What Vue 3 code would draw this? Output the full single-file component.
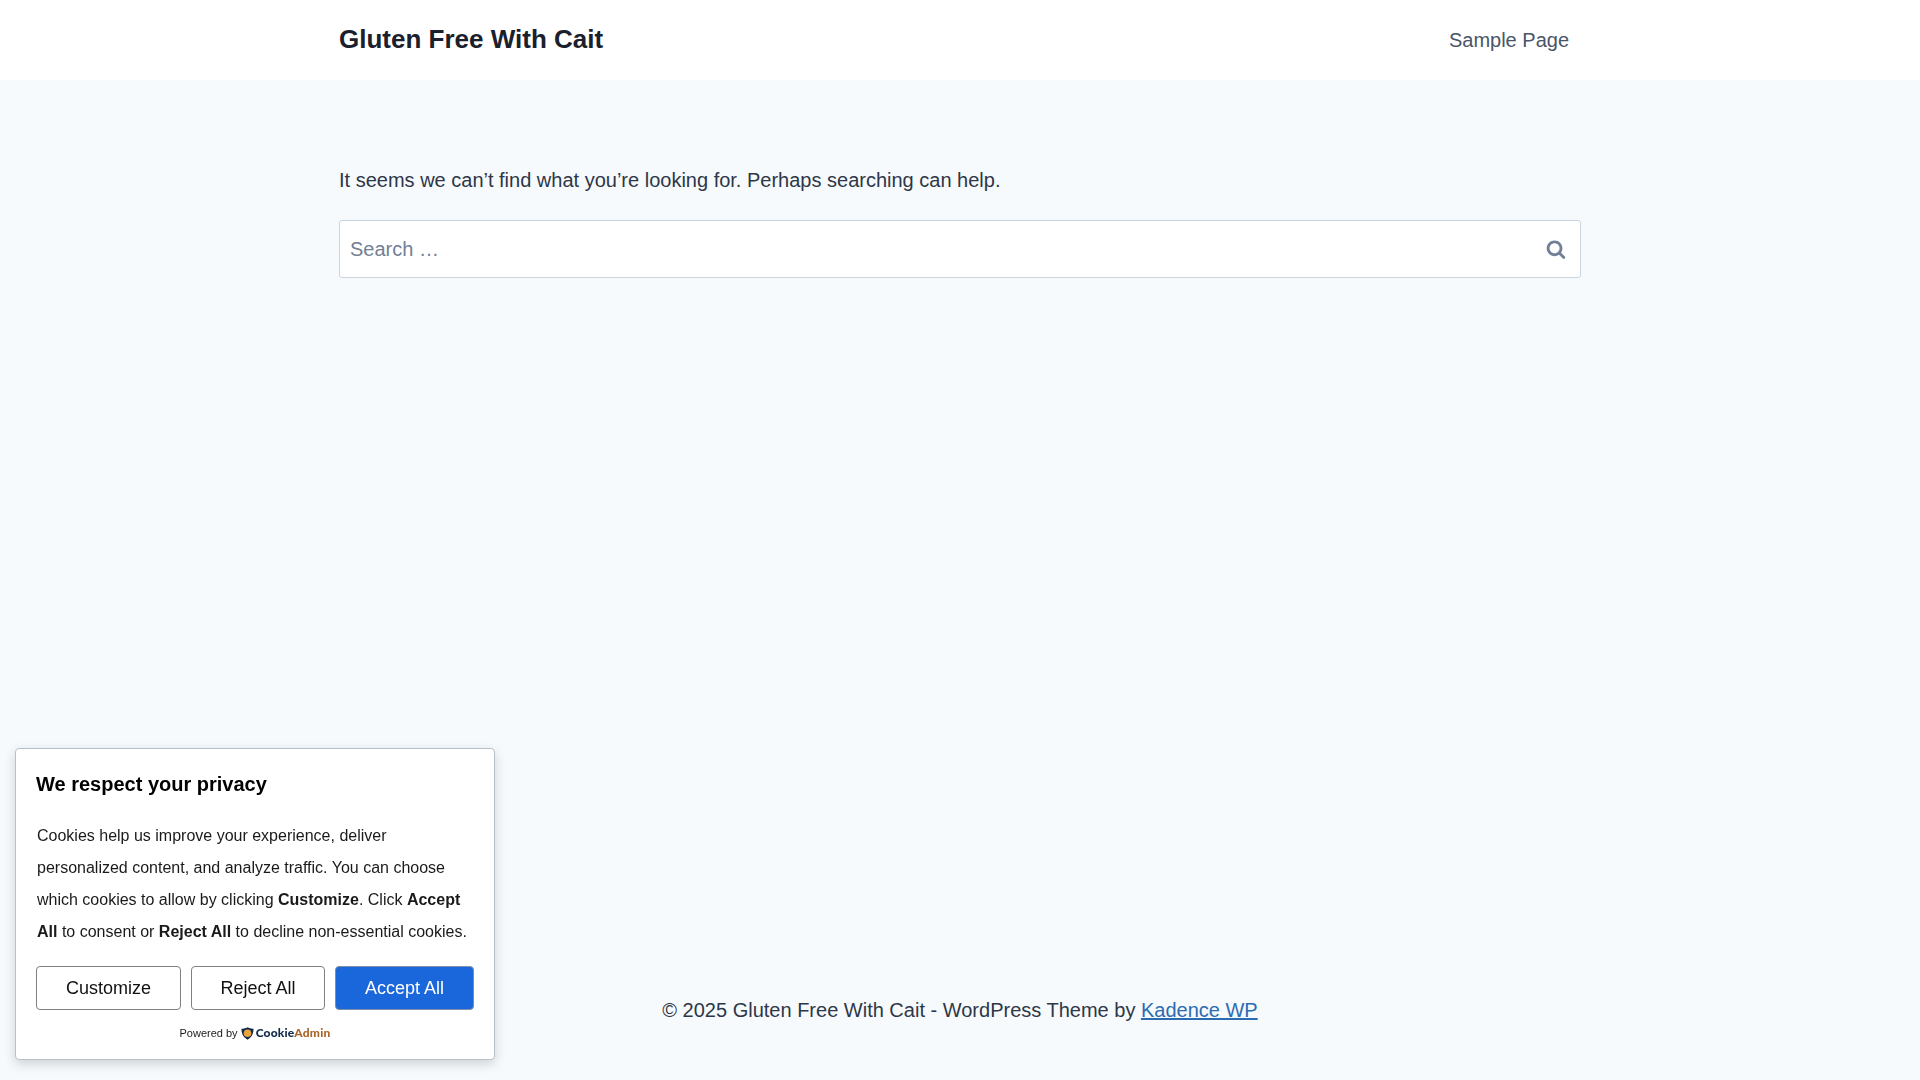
<script setup>
const navItems = ['Sample Page']
</script>

<template>
  <div class="page">
    <header class="site-header">
      <div class="wrap header-row">
        <a class="brand">Gluten Free With Cait</a>
        <nav class="nav"><a v-for="item in navItems" :key="item" class="nav-link">{{ item }}</a></nav>
      </div>
    </header>
    <main class="main wrap">
      <p class="lead">It seems we can’t find what you’re looking for. Perhaps searching can help.</p>
      <form class="search" @submit.prevent>
        <input class="search-input" type="search" placeholder="Search …" />
        <button class="search-btn" type="button" aria-label="Search">
          <svg width="20" height="20" viewBox="0 0 26 28" fill="currentColor"><path d="M18 13c0-3.859-3.141-7-7-7s-7 3.141-7 7 3.141 7 7 7 7-3.141 7-7zM26 26c0 1.094-.906 2-2 2-.531 0-1.047-.219-1.406-.594l-5.359-5.344c-1.828 1.266-4.016 1.937-6.234 1.937C4.923 24 0 19.077 0 13S4.923 2 11 2s11 4.923 11 11c0 2.219-.672 4.406-1.937 6.234l5.359 5.359c.359.359.578.875.578 1.406z"/></svg>
        </button>
      </form>
    </main>
    <footer class="site-footer">
      © 2025 Gluten Free With Cait - WordPress Theme by <a class="footer-link">Kadence WP</a>
    </footer>

    <aside class="cookie">
      <h2 class="cookie-title">We respect your privacy</h2>
      <p class="cookie-text">Cookies help us improve your experience, deliver personalized content, and analyze traffic. You can choose which cookies to allow by clicking <b>Customize</b>. Click <b>Accept All</b> to consent or <b>Reject All</b> to decline non-essential cookies.</p>
      <div class="cookie-actions">
        <button class="btn btn-a" type="button">Customize</button>
        <button class="btn btn-b" type="button">Reject All</button>
        <button class="btn btn-c" type="button">Accept All</button>
      </div>
      <div class="powered">
        <span>Powered by</span>
        <svg class="shield" width="13" height="13" viewBox="0 0 14 14">
          <path d="M7 .4C5.400 1.500 3 2 .5 2c0 4.800 1.600 9.200 6.500 11.600C11.900 11.200 13.500 6.800 13.500 2 11 2 8.600 1.500 7 .4z" fill="#12294a"/>
          <circle cx="7" cy="6.800" r="4.100" fill="#e8a33d"/>
        </svg>
        <span class="logo-word"><span class="logo-a">Cookie</span><span class="logo-b">Admin</span></span>
      </div>
    </aside>
  </div>
</template>

<style>
html, body { margin: 0; background: #f7fafc; }
</style>

<style scoped>
.page {
  min-height: 1080px;
  display: flex;
  flex-direction: column;
  background: #f7fafc;
  color: #2d3748;
  font-family: "Liberation Sans", Arial, sans-serif;
  font-size: 20px;
}
.wrap { width: 1242px; margin: 0 auto; }
.site-header { background: #fff; height: 80px; }
.header-row { height: 80px; display: flex; align-items: center; justify-content: space-between; }
.brand { font-size: 26px; line-height: 78px; height: 80px; font-weight: 700; color: #1a202c; }
.nav-link { color: #4a5568; font-size: 20px; padding: 0 12px; }
.main { flex: 1; padding-top: 80px; }
.lead { margin: 0 0 20px; font-size: 20px; line-height: 40px; }
.search { position: relative; height: 58px; }
.search-input {
  box-sizing: border-box; width: 100%; height: 58px; padding: 0 10px;
  background: #fff; border: 1px solid #cbd5e0; border-radius: 3px;
  font: 20px "Liberation Sans", Arial, sans-serif; color: #2d3748; outline: none;
  -webkit-appearance: none; appearance: none;
}
.search-input::placeholder { color: #718096; opacity: 1; }
.search-btn {
  position: absolute; right: 0; top: 0; width: 50px; height: 58px; padding: 0;
  display: flex; align-items: center; justify-content: center;
  background: none; border: 0; color: #718096;
}
.site-footer { padding-bottom: 50px; text-align: center; font-size: 20px; line-height: 40px; }
.footer-link { color: #2b6cb0; text-decoration: underline; }
.cookie {
  position: fixed; left: 15px; top: 748px; box-sizing: border-box; width: 480px; height: 312px;
  padding: 20px; background: #fff; border: 1px solid #b8c0c8; border-radius: 4px;
  box-shadow: 0 4px 12px rgba(0,0,0,.16); color: #111;
}
.cookie-title { margin: 0; font-size: 20px; line-height: 30px; font-weight: 700; color: #000; }
.cookie-text { margin: 21px 0 0 1px; font-size: 16px; line-height: 32px; color: #1a1a1a; }
.cookie-text b { font-weight: 700; }
.cookie-actions { display: flex; gap: 10px; margin-top: 18px; }
.btn {
  height: 44px; padding: 0; border-radius: 4px; font: 18px "Liberation Sans", Arial, sans-serif;
  border: 1px solid #808080; background: #fff; color: #111;
}
.btn-a { width: 145px; }
.btn-b { width: 134px; }
.btn-c { width: 139px; background: #1a66db; border-color: #7f8ea8; color: #fff; }
.powered { display: flex; align-items: center; justify-content: center; gap: 3px; margin-top: 16px; font-size: 11px; color: #1a1a1a; }
.logo-word { font: 900 12px Lato, sans-serif; letter-spacing: .18px; line-height: 14px; margin-left: -1px; }
.logo-a { color: #12294a; }
.logo-b { color: #a9662a; }
</style>
